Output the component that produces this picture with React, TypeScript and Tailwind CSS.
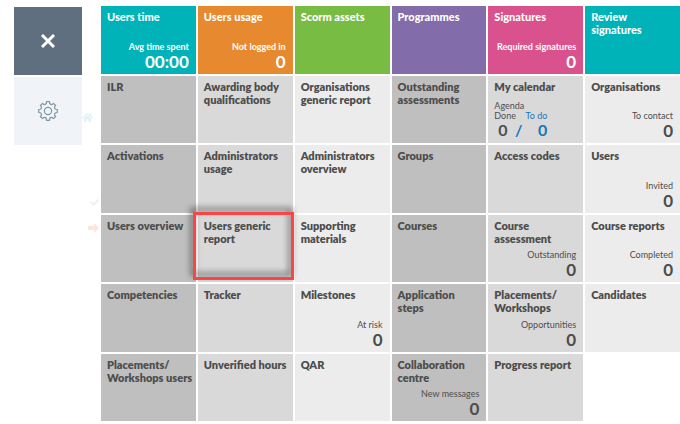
import React from "react";
import clsx from "clsx";
import { FaCheck, FaHome } from "react-icons/fa";

type Tile = {
  title: string;
  color?: string;
  label?: string;
  count?: string;
  agenda?: boolean;
  selected?: boolean;
};

const columnColors = [
  "bg-[#bfbfbf]",
  "bg-[#d9d9d9]",
  "bg-[#ececec]",
  "bg-[#bfbfbf]",
  "bg-[#d9d9d9]",
  "bg-[#ececec]",
];

const tiles: Tile[] = [
  { title: "Users time", color: "bg-[#00b3b8]", label: "Avg time spent", count: "00:00" },
  { title: "Users usage", color: "bg-[#e6892f]", label: "Not logged in", count: "0" },
  { title: "Scorm assets", color: "bg-[#78bc43]" },
  { title: "Programmes", color: "bg-[#836caa]" },
  { title: "Signatures", color: "bg-[#da528d]", label: "Required signatures", count: "0" },
  { title: "Review\nsignatures", color: "bg-[#00b3b8]" },

  { title: "ILR" },
  { title: "Awarding body\nqualifications" },
  { title: "Organisations\ngeneric report" },
  { title: "Outstanding\nassessments" },
  { title: "My calendar", agenda: true },
  { title: "Organisations", label: "To contact", count: "0" },

  { title: "Activations" },
  { title: "Administrators\nusage" },
  { title: "Administrators\noverview" },
  { title: "Groups" },
  { title: "Access codes" },
  { title: "Users", label: "Invited", count: "0" },

  { title: "Users overview" },
  { title: "Users generic\nreport", selected: true },
  { title: "Supporting\nmaterials" },
  { title: "Courses" },
  { title: "Course\nassessment", label: "Outstanding", count: "0" },
  { title: "Course reports", label: "Completed", count: "0" },

  { title: "Competencies" },
  { title: "Tracker" },
  { title: "Milestones", label: "At risk", count: "0" },
  { title: "Application\nsteps" },
  { title: "Placements/\nWorkshops", label: "Opportunities", count: "0" },
  { title: "Candidates" },

  { title: "Placements/\nWorkshops users" },
  { title: "Unverified hours" },
  { title: "QAR" },
  { title: "Collaboration\ncentre", label: "New messages", count: "0" },
  { title: "Progress report" },
];

// eight rounded teeth around a 20x20 box
function gearPath() {
  const point = (deg: number, r: number) => {
    const rad = (deg * Math.PI) / 180;
    return `${(10 + r * Math.cos(rad)).toFixed(2)} ${(10 + r * Math.sin(rad)).toFixed(2)}`;
  };
  let d = `M${point(-9, 9.4)}`;
  for (let a = 0; a < 360; a += 45) {
    d += `L${point(a + 9, 9.4)}L${point(a + 13, 7.8)}Q${point(a + 22.5, 6.6)} ${point(a + 32, 7.8)}L${point(a + 36, 9.4)}`;
  }
  return d + "Z";
}

function GearIcon() {
  return (
    <svg
      viewBox="0 0 20 20"
      className="size-5"
      fill="none"
      stroke="currentColor"
      strokeWidth="1.2"
      strokeLinejoin="round"
    >
      <path d={gearPath()} />
      <circle cx="10" cy="10" r="3.6" />
    </svg>
  );
}

function Agenda() {
  return (
    <div className="mt-auto flex flex-col pb-1 text-[9px] leading-[10px]">
      <span>Agenda</span>
      <div className="flex w-[53px] justify-between">
        <span>Done</span>
        <span className="text-[#1675bd]">To do</span>
      </div>
      <div className="flex w-[53px] justify-between pl-1 text-[16px] leading-[18px] font-bold">
        <span>0</span>
        <span className="text-[#1675bd]">/</span>
        <span className="pl-2 text-[#1675bd]">0</span>
      </div>
    </div>
  );
}

function MenuTile({ tile, index }: { tile: Tile; index: number }) {
  return (
    <a
      href="#"
      className={clsx(
        "relative flex flex-col pt-1 pl-[6px]",
        tile.color ? "text-white" : "text-[#4d4d4d]",
        tile.color ?? columnColors[index % 6]
      )}
    >
      <span
        className={clsx("text-[11px] leading-[13px] whitespace-pre", tile.color ? "font-black" : "font-extrabold")}
      >
        {tile.title}
      </span>
      {tile.agenda && <Agenda />}
      {tile.label && (
        <div className="mt-auto flex flex-col items-end pr-[7px] pb-[3px]">
          <span className={clsx("text-[9px] leading-[12px] whitespace-nowrap", tile.color && "font-bold")}>
            {tile.label}
          </span>
          <span className="text-[17px] leading-[18px] font-bold">{tile.count}</span>
        </div>
      )}
      {tile.selected && (
        <span className="absolute -top-[3px] -right-px bottom-[2px] -left-[5px] z-10 border-3 border-[#fb4444] drop-shadow-[-2px_-4px_3px_rgba(0,0,0,0.6)]" />
      )}
    </a>
  );
}

export default function App() {
  return (
    <div className="flex min-h-screen bg-white pt-[6px] pb-[3px] pl-[14px] font-['Lato',sans-serif]">
      <aside className="relative flex w-[87px] shrink-0 flex-col gap-0.5 pt-px">
        <button
          aria-label="Close menu"
          className="flex size-[68px] items-center justify-center bg-[#5f6f80] text-white"
        >
          <svg viewBox="0 0 14 14" className="size-[14px]" stroke="currentColor" strokeWidth="3">
            <path d="M1 1l12 12M13 1L1 13" />
          </svg>
        </button>
        <button
          aria-label="Settings"
          className="flex size-[68px] items-center justify-center bg-[#f0f4f8] text-[#8595a5]"
        >
          <GearIcon />
        </button>
        {/* page behind the menu, faded out */}
        <FaHome size={11} className="absolute top-[106px] left-[68px] text-[#e3f0f5]" />
        <FaCheck size={9} className="absolute top-[192px] left-[76px] text-[#e6f5e3]" />
        <svg viewBox="0 0 11 10" className="absolute top-[217px] left-[74px] h-[10px] w-[11px] fill-[#fde5da]">
          <path d="M0 3h6V0l5 5-5 5V7H0z" />
        </svg>
      </aside>
      <nav className="grid flex-1 auto-rows-[minmax(66px,1fr)] grid-cols-6 gap-0.5">
        {tiles.map((tile, index) => (
          <MenuTile key={index} tile={tile} index={index} />
        ))}
      </nav>
    </div>
  );
}
